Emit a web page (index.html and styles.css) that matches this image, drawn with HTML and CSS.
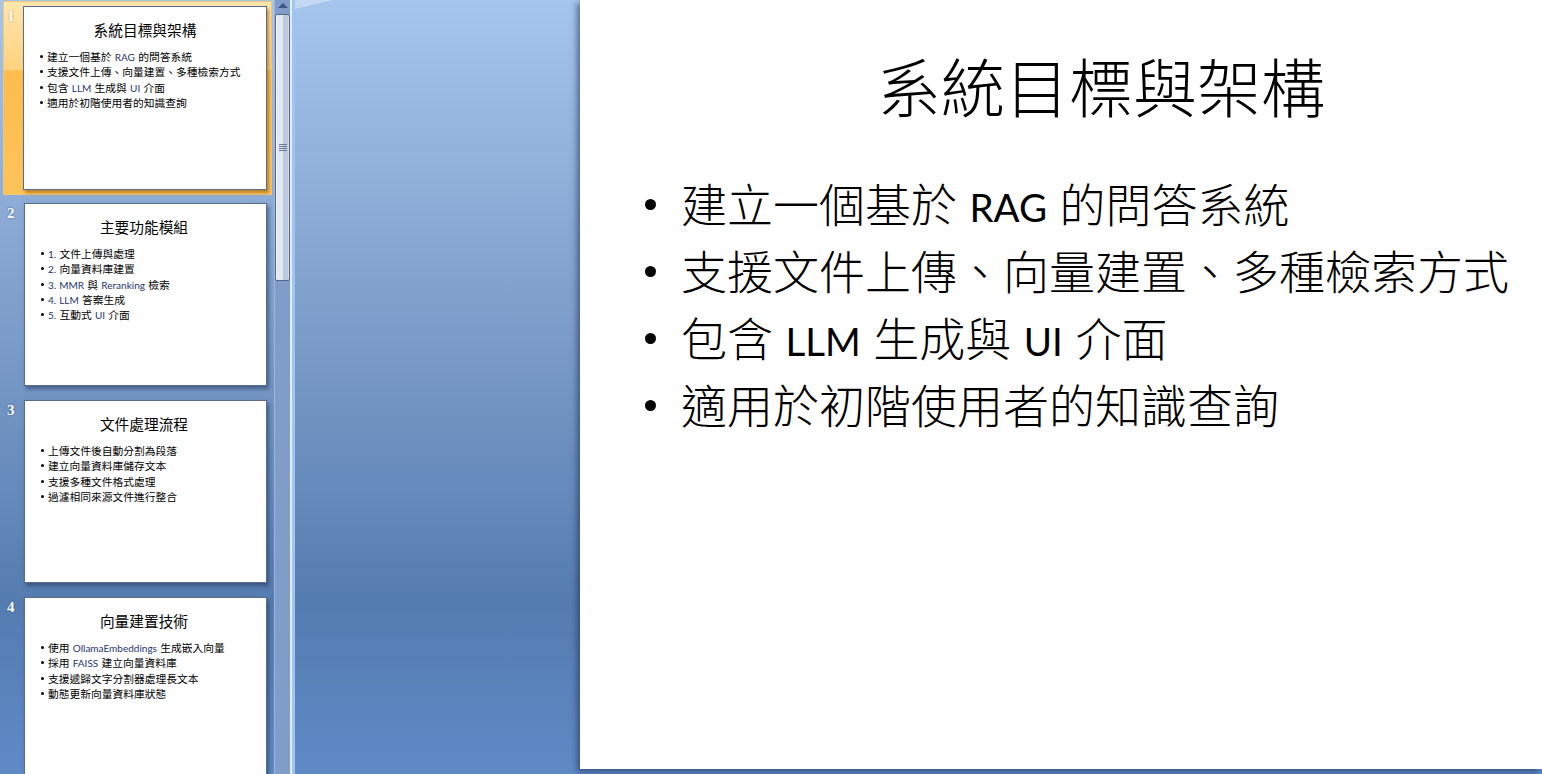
FILE: index.html
```html
<!DOCTYPE html>
<html lang="zh-Hant">
<head>
<meta charset="utf-8">
<title>系統目標與架構</title>
<link rel="stylesheet" href="styles.css">
</head>
<body>
<div class="app">
  <aside class="pane">
    <div class="thumb-row selected">
      <span class="num">1</span>
      <div class="thumb">
        <h2 class="thumb-title">系統目標與架構</h2>
        <ul class="thumb-list">
          <li>建立一個基於 <span class="lat">RAG</span> 的問答系統</li>
          <li>支援文件上傳、向量建置、多種檢索方式</li>
          <li>包含 <span class="lat">LLM</span> 生成與 <span class="lat">UI</span> 介面</li>
          <li>適用於初階使用者的知識查詢</li>
        </ul>
      </div>
    </div>
    <div class="thumb-row">
      <span class="num">2</span>
      <div class="thumb">
        <h2 class="thumb-title">主要功能模組</h2>
        <ul class="thumb-list">
          <li><span class="lat">1.</span> 文件上傳與處理</li>
          <li><span class="lat">2.</span> 向量資料庫建置</li>
          <li><span class="lat">3. MMR</span> 與 <span class="lat">Reranking</span> 檢索</li>
          <li><span class="lat">4. LLM</span> 答案生成</li>
          <li><span class="lat">5.</span> 互動式 <span class="lat">UI</span> 介面</li>
        </ul>
      </div>
    </div>
    <div class="thumb-row">
      <span class="num">3</span>
      <div class="thumb">
        <h2 class="thumb-title">文件處理流程</h2>
        <ul class="thumb-list">
          <li>上傳文件後自動分割為段落</li>
          <li>建立向量資料庫儲存文本</li>
          <li>支援多種文件格式處理</li>
          <li>過濾相同來源文件進行整合</li>
        </ul>
      </div>
    </div>
    <div class="thumb-row">
      <span class="num">4</span>
      <div class="thumb">
        <h2 class="thumb-title">向量建置技術</h2>
        <ul class="thumb-list">
          <li>使用 <span class="lat">OllamaEmbeddings</span> 生成嵌入向量</li>
          <li>採用 <span class="lat">FAISS</span> 建立向量資料庫</li>
          <li>支援遞歸文字分割器處理長文本</li>
          <li>動態更新向量資料庫狀態</li>
        </ul>
      </div>
    </div>
  </aside>
  <div class="scrollbar">
    <svg class="arrow" width="10" height="5" viewBox="0 0 10 5"><path d="M0 5 L5 0 L10 5 Z" fill="#3f5587"/></svg>
    <div class="handle">
      <div class="grip"><i></i><i></i><i></i><i></i></div>
    </div>
  </div>
  <div class="splitter"></div>
  <main class="stage">
    <svg class="glare" width="38" height="9" viewBox="0 0 38 9"><path d="M0 0 H38 L0 9 Z" fill="#c3d8f2"/></svg>
    <section class="slide">
      <h1 class="slide-title">系統目標與架構</h1>
      <ul class="slide-list">
        <li>建立一個基於 <span class="lat">RAG</span> 的問答系統</li>
        <li>支援文件上傳、向量建置、多種檢索方式</li>
        <li>包含 <span class="lat">LLM</span> 生成與 <span class="lat">UI</span> 介面</li>
        <li>適用於初階使用者的知識查詢</li>
      </ul>
    </section>
  </main>
</div>
</body>
</html>
```

FILE: styles.css
```css
* { box-sizing: border-box; }
html, body { margin: 0; height: 100%; overflow: hidden; }
body {
  font-family: "Lato", "Noto Sans CJK TC", sans-serif;
  color: #000;
}
.app {
  display: flex;
  height: 774px;
  width: 1542px;
  overflow: hidden;
  background: linear-gradient(180deg, #a6c5ec 0%, #7f9fcb 40%, #557cb0 78%, #5f8ac6 100%);
}
.pane {
  width: 274px;
  flex: none;
  padding: 1px 0 0 3px;
  overflow: hidden;
  background: linear-gradient(180deg, #a6c5ec 0%, #7f9fcb 40%, #557cb0 78%, #5f8ac6 100%);
}
.thumb-row {
  display: flex;
  height: 194px;
  width: 269px;
  margin-bottom: 3px;
  padding: 5px 0 0 0;
  position: relative;
}
.thumb-row.selected {
  background: linear-gradient(180deg, #fee6ad 0%, #fed27f 35.5%, #fdbd4f 36%, #fcc25a 100%);
  box-shadow: inset 0 0 0 1px #f3c873;
}
.num {
  width: 21px;
  flex: none;
  padding: 1px 0 0 4px;
  font: bold 15px/18px "Liberation Serif", serif;
  color: #fff;
  text-shadow: 0 0 2px #30527f;
}
.selected .num { width: 20px; text-shadow: 0 0 2px #b9843a; }
.thumb {
  width: 243px;
  height: 183px;
  background: #fff;
  border: 1px solid #5b6c88;
  box-shadow: 2px 3px 4px rgba(30, 50, 90, .55);
  padding: 13px 0 0 0;
  flex: none;
}
.selected .thumb {
  width: 244px;
  height: 184px;
  box-shadow: 2px 3px 3px rgba(150, 90, 10, .6);
}
.thumb-title {
  margin: 0;
  font-size: 14.7px;
  font-weight: 400;
  line-height: 20px;
  text-align: center;
  padding-right: 3px;
}
.selected .thumb-title { padding-right: 0; }
.thumb-list {
  margin: 9px 0 0;
  padding: 0 0 0 23px;
  font-size: 10.75px;
  font-weight: 400;
  line-height: 15.35px;
  list-style: none;
  word-spacing: .5px;
}
.thumb-list .lat { font-size: 10px; line-height: 0; color: #26356c; }
.thumb-list li { position: relative; white-space: nowrap; }
.thumb-list li::before {
  content: "";
  position: absolute;
  left: -7px;
  top: 6px;
  width: 3px;
  height: 3px;
  border-radius: 50%;
  background: #000;
}
.scrollbar {
  width: 16px;
  flex: none;
  background: #7f9dc8;
  border-left: 1px solid #9db6d9;
  display: flex;
  flex-direction: column;
  align-items: center;
}
.arrow { margin-top: 3px; flex: none; }
.handle {
  margin-top: 6px;
  width: 15px;
  height: 267px;
  border: 1px solid #54688f;
  border-radius: 2px;
  background: linear-gradient(90deg, #f4f6fa 0 8%, #e2e8f1 8% 50%, #bcc9dc 55% 88%, #d2dbe8 92% 100%);
  display: flex;
  align-items: center;
  justify-content: center;
  flex: none;
}
.grip { display: flex; flex-direction: column; gap: 1px; }
.grip i { display: block; width: 8px; height: 1px; background: #6c7a90; }
.splitter {
  width: 5px;
  flex: none;
  background: linear-gradient(90deg, #e4effc 0 2px, #9fc4f6 2px 100%);
}
.stage {
  flex: 1;
  min-width: 0;
  padding-left: 285px;
  height: 769px;
  position: relative;
}
.glare { position: absolute; left: 0; top: 0; }
.slide {
  width: 962px;
  height: 769px;
  background: #fff;
  box-shadow: -3px 3px 6px rgba(30, 50, 90, .6);
  padding-top: 50px;
}
.slide-title {
  margin: 0;
  font-size: 64px;
  font-weight: 300;
  line-height: 76px;
  text-align: center;
  padding-left: 80px;
  width: 962px;
}
.slide-list {
  margin: 45px 0 0;
  padding: 0 0 0 101px;
  font-size: 46px;
  font-weight: 300;
  line-height: 67px;
  list-style: none;
}
.slide-list .lat { font-size: 38.5px; font-weight: 400; line-height: 0; }
.slide-list li { position: relative; white-space: nowrap; }
.slide-list li::before {
  content: "";
  position: absolute;
  left: -36px;
  top: 28px;
  width: 11px;
  height: 11px;
  border-radius: 50%;
  background: #000;
}
```
